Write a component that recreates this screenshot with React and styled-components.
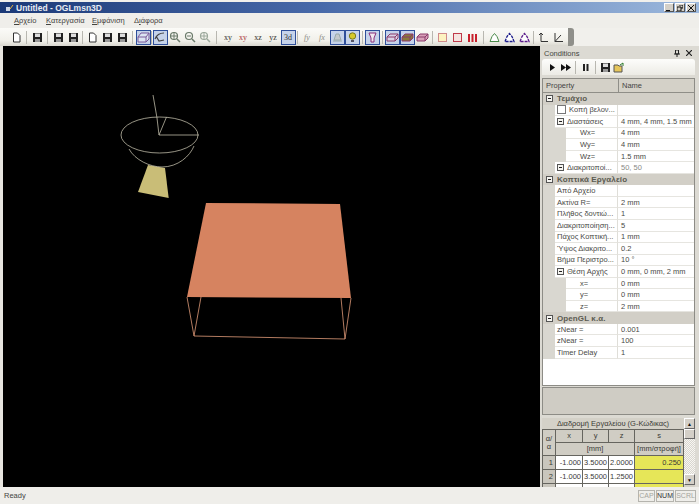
import React from 'react';
import styled, { createGlobalStyle } from 'styled-components';

const Global = createGlobalStyle`
  html, body { margin: 0; padding: 0; background: #f4f3f0; }
  #root { width: 699px; height: 504px; overflow: hidden; }
`;
const Win = styled.div`
  width: 699px; height: 504px; display: flex; flex-direction: column; overflow: hidden;
  background: #f1f0ec; font-family: "Liberation Sans", Arial, sans-serif; font-size: 8px; color: #3c3c3c;
  padding-top: 2px; box-sizing: border-box;
`;
const TitleBar = styled.div`
  height: 11px; flex: none; display: flex; align-items: center; padding: 0 3px 0 6px;
  background: linear-gradient(90deg, #1c3a78 0%, #4668a8 45%, #9db9dd 100%);
`;
const TitleText = styled.span`
  color: #e8ecf4; font-weight: bold; font-size: 8.5px; margin-left: 2px; flex: 1; white-space: nowrap;
`;
const WinBtns = styled.div` display: flex; gap: 1px; `;
const WinBtn = styled.div`
  width: 10px; height: 9px; background: #d4d0c8; border: 1px solid; box-sizing: border-box;
  border-color: #fff #555 #555 #fff; display: flex; align-items: center; justify-content: center;
`;
const MenuBar = styled.div`
  height: 15px; flex: none; display: flex; align-items: center; padding-left: 14px;
  background: #efeeea;
`;
const MenuItem = styled.span` width: ${p => p.$w}px; color: #44443f; white-space: nowrap; font-size: 7.5px; `;
const ToolRow = styled.div`
  height: 18px; flex: none; display: flex; align-items: flex-start;
`;
const ToolBar = styled.div`
  width: 574px; height: 18px; display: flex; align-items: center; padding-left: 8.5px; box-sizing: border-box;
  background: linear-gradient(180deg, #fbfbf8 0%, #f1f0ea 70%, #d9d7cf 100%);
  border-radius: 0 3px 3px 0; position: relative;
`;
const ToolEnd = styled.div`
  position: absolute; right: 0; top: 0; bottom: 0; width: 6px; background: #8f8f8a; border-radius: 0 3px 3px 0;
`;
const TB = styled.div`
  width: 15px; height: 15px; flex: none; display: flex; align-items: center; justify-content: center; box-sizing: border-box;
  font-family: "Liberation Serif", serif; font-size: 8px; color: ${p => p.$c || '#33332f'}; font-style: ${p => p.$i ? 'italic' : 'normal'};
  ${p => p.$on ? 'background:#c6d3ea; border:1px solid #2f4f9a;' : ''}
`;
const Sep = styled.div` width: 1px; height: 13px; flex: none; background: #b8b7b0; margin: 0 ${p => p.$m}px; `;
const Main = styled.div` flex: 1; min-height: 0; display: flex; padding-left: 3px; background: #e8e6e0; `;
const Canvas = styled.div` width: 537px; background: #000; flex: none; `;
const Scene = styled.svg` display: block; width: 537px; height: 100%; `;
const Panel = styled.div`
  flex: 1; min-width: 0; padding: 1px 4px 0 2px; display: flex; flex-direction: column; background: #dcdad3; box-sizing: border-box;
`;
const PanelHead = styled.div`
  height: 12px; flex: none; display: flex; align-items: center; justify-content: space-between; padding: 0 3px 0 2px;
  color: #45453f; font-size: 7.5px;
`;
const PanelIcons = styled.div` display: flex; gap: 6px; align-items: center; `;
const PanelTools = styled.div`
  height: 16px; flex: none; display: flex; align-items: center; padding-left: 4px; margin-bottom: 3px;
  background: linear-gradient(180deg, #fdfdfb, #ecebe5);
  border-radius: 3px 3px 0 0;
`;
const PTB = styled.div` width: 13px; height: 14px; flex: none; display: flex; align-items: center; justify-content: center; `;
const Grid = styled.div`
  height: 308px; flex: none; background: #fff; border: 1px solid #8d8c86; box-sizing: border-box; overflow: hidden;
`;
const GridHead = styled.div`
  height: 13px; display: grid; grid-template-columns: 75px 1fr; background: #d4d1c8; border-bottom: 1px solid #8f8e88;
`;
const HeadCell = styled.div`
  display: flex; align-items: center; padding-left: 3px; font-size: 7.5px; color: #444;
  & + & { border-left: 1px solid #8f8e88; }
`;
const Row = styled.div`
  height: 11.55px; display: grid; grid-template-columns: ${p => p.$g}px ${p => 75 - p.$g}px 1fr; align-items: stretch;
  background: #fff; font-size: 7.5px; white-space: nowrap;
`;
const Gutter = styled.div` background: #d9d7d0; `;
const NameCell = styled.div`
  display: flex; align-items: center; overflow: hidden; padding-left: ${p => p.$pad || 2}px; gap: 3px;
  border-bottom: 1px solid #e6e5e0; border-right: 1px solid #dfded8; box-sizing: border-box; color: #4a4a46;
`;
const ValueCell = styled.div`
  display: flex; align-items: center; padding-left: 3px; border-bottom: 1px solid #e6e5e0; box-sizing: border-box; color: ${p => p.$dim ? '#8a8a84' : '#4a4a46'};
`;
const CatRow = styled.div`
  height: 11.55px; background: #d2cfc7; display: flex; align-items: center; padding-left: 3px; gap: 4px;
  font-size: 8px; font-weight: bold; color: #5a5a50; letter-spacing: .1px;
`;
const Exp = styled.span`
  width: 7px; height: 7px; flex: none; border: 1px solid #555; background: #f6f5f1; box-sizing: border-box; position: relative; display: inline-block;
  &::after { content: ''; position: absolute; left: 1px; right: 1px; top: 2px; height: 1px; background: #222; }
`;
const Check = styled.span` width: 9px; height: 9px; flex: none; background: #fff; border: 1px solid #777; box-sizing: border-box; `;
const Desc = styled.div`
  height: 28px; flex: none; margin-top: 1px; background: #cfccc4; border: 1px solid #8d8c86; box-sizing: border-box;
`;
const Lower = styled.div` flex: 1; min-height: 0; margin-top: 3px; display: flex; align-items: flex-start; background: #d4d1c8; overflow: hidden; `;
const Tbl = styled.table`
  width: 141px; table-layout: fixed; border-collapse: collapse; flex: none; font-size: 7.5px; color: #3a3a36; line-height: 8px;
  td, th { border: 1px solid #66655f; font-weight: normal; padding: 0; text-align: center; overflow: hidden; white-space: nowrap; }
`;
const Cap = styled.th` height: 11px; border: none !important; background: #d4d1c8; `;
const Hd = styled.th` height: 12px; background: #d0cdc4; `;
const IdxCell = styled.td` height: 13px; background: #c9c6bd; text-align: right !important; padding-right: 2px !important; `;
const Num = styled.td` background: #fff; text-align: right !important; padding-right: 1px !important; `;
const Yellow = styled.td` background: #e6e658; text-align: right !important; padding-right: 2px !important; `;
const ScrollBar = styled.div`
  flex: 1; display: flex; flex-direction: column; height: 67px;
  background: repeating-conic-gradient(#d8d6cf 0 25%, #f7f6f2 0 50%) 0 0 / 2px 2px;
`;
const ScrollBtn = styled.div`
  height: ${p => p.$h || 11}px; flex: none; background: #d4d0c8; border: 1px solid; border-color: #fff #666 #666 #fff; box-sizing: border-box;
  display: flex; align-items: center; justify-content: center; font-size: 5px; color: #111;
`;
const ScrollFill = styled.div` flex: 1; `;
const Status = styled.div`
  height: 17px; flex: none; display: flex; align-items: center; padding: 0 3px 0 4px; gap: 1px; background: #efeeea; color: #44443f; font-size: 7.5px;
`;
const StatusText = styled.span` flex: 1; `;
const Ind = styled.span`
  width: ${p => p.$w}px; height: 12px; border: 1px solid #b5b4ae; box-sizing: border-box; display: flex; align-items: center; justify-content: center;
  font-size: 7px; color: ${p => p.$on ? '#333' : '#a5a49e'};
`;

const Ico = ({ children, w = 11, h = 11 }) => <svg width={w} height={h} viewBox={`0 0 ${w} ${h}`}>{children}</svg>;
const Page = () => <Ico><path d="M2.500 1h4l2.500 2.500V10h-6.500z" fill="#fff" stroke="#333" /></Ico>;
const Floppy = ({ c = '#222' }) => <Ico><path d="M1 1h9v9H1z" fill={c} /><path d="M3 1.500h5v3.500H3z" fill="#ddd" /><path d="M3 7h5v3H3z" fill="#999" /></Ico>;
const Frame = () => <Ico w={13} h={11}><path d="M1 5l3-4h8v6l-3 3H1z M1 5h8v5 M9 5l3-4" fill="#dce4f2" stroke="#7a5a9a" /></Ico>;
const Lens = ({ plus, c = '#6a7a6a' }) => <Ico w={12} h={12}><circle cx="5" cy="5" r="3.500" fill="none" stroke={c} strokeWidth="1.200" /><path d="M8 8l3 3" stroke={c} strokeWidth="1.500" />{plus && <path d="M5 1v8M1 5h8" stroke={c} />}{!plus && <path d="M3 5h4" stroke={c} />}</Ico>;
const Hand = () => <Ico w={12} h={12}><path d="M1 8C3 3 6 2 10 2M2 5l3 5 5-1" fill="none" stroke="#444" strokeWidth="1.200" /></Ico>;
const Lamp = () => <Ico><path d="M4 2h3l2 6H2z M1 9h9" fill="#c5c9cc" stroke="#9aa" /></Ico>;
const Bulb = () => <Ico><circle cx="5.500" cy="4" r="3.200" fill="#d5c92c" stroke="#7a7a20" /><path d="M4 8h3v2H4z" fill="#556" /></Ico>;
const Prog = () => <Ico><path d="M2 1h7L7 6v4H4V6z" fill="#f2e7ef" stroke="#8a2f7a" /></Ico>;
const Box = ({ f, s = '#8a3a6a' }) => <Ico w={13} h={11}><path d="M1 5l3-3h8v4l-3 3H1z M1 5h8v4 M9 5l3-3" fill={f} stroke={s} /></Ico>;
const Sq = ({ f, s }) => <Ico><rect x="1.500" y="1.500" width="8" height="8" fill={f} stroke={s} /></Ico>;
const Bars = () => <Ico><path d="M1 2h2v8H1zM4.500 2h2v8h-2zM8 2h2v8H8z" fill="#c8202c" /></Ico>;
const Tri = ({ s, d }) => <Ico><path d="M1 9.500l2-5 2.500-3 2.500 3 2 5z" fill="#fff" stroke={s} strokeDasharray={d} strokeWidth={d ? 1.300 : 1} /></Ico>;
const Axis = ({ a }) => <Ico><path d={a ? 'M2 1v8.500h8 M2 9.500L8 3' : 'M3 1v8.500h7 M1 3l2-2 2 2'} fill="none" stroke="#333" /></Ico>;

const Play = () => <Ico w={9} h={9}><path d="M2 1l5 3.500L2 8z" fill="#111" /></Ico>;
const FF = () => <Ico w={10} h={9}><path d="M0 1l5 3.500L0 8zM5 1l5 3.500L5 8z" fill="#111" /></Ico>;
const Pause = () => <Ico w={9} h={9}><path d="M2 1h2v7H2zM5.500 1h2v7h-2z" fill="#222" /></Ico>;
const Open = () => <Ico w={12} h={11}><path d="M1 3h4l1 1h3v6H1z" fill="#e6c65a" stroke="#555" /><path d="M7 3l3-2v3" fill="none" stroke="#2a7a2a" /></Ico>;
const Pin = () => <Ico w={6} h={7}><path d="M1.500 0h3v4h-3zM0 4h6M3 4v3" fill="none" stroke="#222" /></Ico>;
const Cross = () => <Ico w={6} h={6}><path d="M0 0l6 6M6 0L0 6" stroke="#222" strokeWidth="1.200" /></Ico>;

const tools = [
  ['b', <Page />], ['s', 2.5], ['b', <Floppy />], ['s', 2.5], ['b', <Floppy />], ['b', <Floppy />], ['s', 1.5],
  ['b', <Page />], ['b', <Floppy />], ['b', <Floppy />], ['s', 2.5], ['on', <Frame />], ['s', 0.5], ['on', <Hand />],
  ['b', <Lens plus />], ['b', <Lens />], ['b', <Lens plus c="#9aa79a" />], ['s', 3.5],
  ['t', 'xy'], ['t', 'xy', '#a33'], ['t', 'xz'], ['t', 'yz'], ['ont', '3d'], ['s', 1.5],
  ['i', 'fy'], ['i', 'fx'], ['on', <Lamp />], ['on', <Bulb />], ['s', 2],
  ['on', <Prog />], ['s', 2], ['on', <Box f="#d9d3e6" />], ['on', <Box f="#8a7a3a" />], ['b', <Box f="#d8a0b8" />], ['s', 2],
  ['b', <Sq f="#fdf2c0" s="#d08a8a" />], ['b', <Sq f="#f5e4e0" s="#c03a4a" />], ['b', <Bars />], ['s', 3],
  ['b', <Tri s="#4a8a4a" />], ['b', <Tri s="#1a1a8a" d="3 1" />], ['b', <Tri s="#5a1a8a" d="3 1" />], ['s', 1.5],
  ['b', <Axis />], ['b', <Axis a />],
];

const rows = [
  { c: 'Τεμάχιο' },
  { g: 12, n: 'Κοπή βελον...', chk: 1, pad: 2 },
  { g: 12, n: 'Διαστάσεις', v: '4 mm, 4 mm, 1.5 mm', exp: 1 },
  { g: 23, n: 'Wx=', v: '4 mm', pad: 14 },
  { g: 23, n: 'Wy=', v: '4 mm', pad: 14 },
  { g: 23, n: 'Wz=', v: '1.5 mm', pad: 14 },
  { g: 12, n: 'Διακριτοποί...', v: '50, 50', exp: 1, dim: 1 },
  { c: 'Κοπτικά Εργαλείο' },
  { g: 12, n: 'Από Αρχείο', v: '' },
  { g: 12, n: 'Ακτίνα R=', v: '2 mm' },
  { g: 12, n: 'Πλήθος δοντιώ...', v: '1' },
  { g: 12, n: 'Διακριτοποίηση...', v: '5' },
  { g: 12, n: 'Πάχος Κοπτική...', v: '1 mm' },
  { g: 12, n: 'Ύψος Διακριτο...', v: '0.2' },
  { g: 12, n: 'Βήμα Περιστρο...', v: '10 °' },
  { g: 12, n: 'Θέση Αρχής', v: '0 mm, 0 mm, 2 mm', exp: 1 },
  { g: 23, n: 'x=', v: '0 mm', pad: 14 },
  { g: 23, n: 'y=', v: '0 mm', pad: 14 },
  { g: 23, n: 'z=', v: '2 mm', pad: 14 },
  { c: 'OpenGL κ.α.' },
  { g: 12, n: 'zNear =', v: '0.001' },
  { g: 12, n: 'zNear =', v: '100' },
  { g: 12, n: 'Timer Delay', v: '1' },
];

const bowl = '#bdb9a6';
export default function App() {
  return (
    <Win>
      <Global />
      <TitleBar>
        <Ico w={8} h={8}><path d="M0 3h4v4H0z" fill="#cfd8e8" /><path d="M4 5l3-4" stroke="#e8b23a" /></Ico>
        <TitleText>Untitled - OGLmsn3D</TitleText>
        <WinBtns>
          <WinBtn><Ico w={6} h={6}><path d="M0 5h4v1H0z" fill="#111" /></Ico></WinBtn>
          <WinBtn><Ico w={6} h={6}><path d="M2 0h4v3H4M0 2h4v4H0z" fill="none" stroke="#111" /></Ico></WinBtn>
          <WinBtn><Ico w={6} h={6}><path d="M0 0l6 6M6 0L0 6" stroke="#111" /></Ico></WinBtn>
        </WinBtns>
      </TitleBar>
      <MenuBar>
        <MenuItem $w={32}><u>Α</u>ρχείο</MenuItem>
        <MenuItem $w={46}><u>Κ</u>ατεργασία</MenuItem>
        <MenuItem $w={42}><u>Ε</u>μφάνιση</MenuItem>
        <MenuItem $w={40}>Δ<u>ι</u>άφορα</MenuItem>
      </MenuBar>
      <ToolRow>
        <ToolBar>
          {tools.map(([k, a, b], i) => {
            if (k === 's') return <Sep key={i} $m={a} />;
            if (k === 'b') return <TB key={i}>{a}</TB>;
            if (k === 'on' || k === 'ont') return <TB key={i} $on>{a}</TB>;
            if (k === 't') return <TB key={i} $c={b}>{a}</TB>;
            return <TB key={i} $i $c="#8a8a84">{a}</TB>;
          })}
          <ToolEnd />
        </ToolBar>
      </ToolRow>
      <Main>
        <Canvas>
          <Scene viewBox="3 46 537 441" preserveAspectRatio="xMinYMin">
            <path d="M148 165L165 168L168.700 198L138 192Z" fill="#c9bd77" />
            <ellipse cx="159.500" cy="135" rx="38.500" ry="18" fill="none" stroke={bowl} strokeWidth=".8" />
            <path d="M129 149C135 160 150 167 162 167C178 167 190 156 194 146" fill="none" stroke={bowl} strokeWidth=".8" />
            <path d="M159 135H199M159 135L166.500 117M159 135L157 118L153 95" fill="none" stroke={bowl} strokeWidth=".8" />
            <path d="M206 203L340 204L351 298L187 297Z" fill="#d68360" />
            <path d="M187 297L194 336L345 339L351 298M201 297L194 336M341 298L345 339" fill="none" stroke="#e09a78" strokeWidth=".8" />
          </Scene>
        </Canvas>
        <Panel>
          <PanelHead>
            <span>Conditions</span>
            <PanelIcons><Pin /><Cross /></PanelIcons>
          </PanelHead>
          <PanelTools>
            <PTB><Play /></PTB><PTB><FF /></PTB><Sep $m={3} /><PTB><Pause /></PTB><Sep $m={3} />
            <PTB><Floppy /></PTB><PTB><Open /></PTB>
          </PanelTools>
          <Grid>
            <GridHead><HeadCell>Property</HeadCell><HeadCell>Name</HeadCell></GridHead>
            {rows.map((r, i) => r.c ? (
              <CatRow key={i}><Exp />{r.c}</CatRow>
            ) : (
              <Row key={i} $g={r.g}>
                <Gutter />
                <NameCell $pad={r.pad}>
                  {r.chk && <Check />}{r.exp && <Exp />}{r.n}
                </NameCell>
                <ValueCell $dim={r.dim}>{r.v}</ValueCell>
              </Row>
            ))}
          </Grid>
          <Desc />
          <Lower>
            <Tbl>
              <colgroup>
                <col style={{ width: 13 }} /><col style={{ width: 27 }} /><col style={{ width: 26 }} /><col style={{ width: 26 }} /><col style={{ width: 49 }} />
              </colgroup>
              <tbody>
                <tr><Cap colSpan={5}>Διαδρομή Εργαλείου (G-Κώδικας)</Cap></tr>
                <tr><Hd rowSpan={2}>α/<br />α</Hd><Hd>x</Hd><Hd>y</Hd><Hd>z</Hd><Hd>s</Hd></tr>
                <tr><Hd colSpan={3}>[mm]</Hd><Hd>[mm/στροφή]</Hd></tr>
                <tr><IdxCell>1</IdxCell><Num>-1.000</Num><Num>3.5000</Num><Num>2.0000</Num><Yellow>0.250</Yellow></tr>
                <tr><IdxCell>2</IdxCell><Num>-1.000</Num><Num>3.5000</Num><Num>1.2500</Num><Yellow /></tr>
                <tr><IdxCell>3</IdxCell><Num>-1.000</Num><Num>3.5000</Num><Num>1.2500</Num><Yellow /></tr>
              </tbody>
            </Tbl>
            <ScrollBar>
              <ScrollBtn>▲</ScrollBtn>
              <ScrollBtn $h={10} />
              <ScrollFill />
              <ScrollBtn>▼</ScrollBtn>
            </ScrollBar>
          </Lower>
        </Panel>
      </Main>
      <Status>
        <StatusText>Ready</StatusText>
        <Ind $w={17}>CAP</Ind>
        <Ind $w={18} $on>NUM</Ind>
        <Ind $w={21}>SCRL</Ind>
      </Status>
    </Win>
  );
}
